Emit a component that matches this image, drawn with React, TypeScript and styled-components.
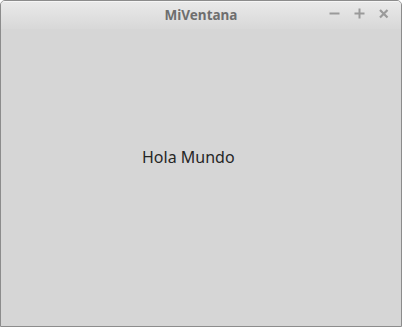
import styled, { createGlobalStyle } from "styled-components";

const Global = createGlobalStyle`
  html, body {
    margin: 0;
    padding: 0;
    background: #ffffff;
  }
`;

const Window = styled.div`
  width: 402px;
  height: 327px;
  box-sizing: border-box;
  border: 1px solid #8c8c8c;
  border-radius: 5px 5px 0 0;
  background: #d6d6d6;
  display: flex;
  flex-direction: column;
  overflow: hidden;
  font-family: "Noto Sans", "DejaVu Sans", sans-serif;
`;

const TitleBar = styled.div`
  height: 27px;
  display: grid;
  grid-template-columns: 1fr auto 1fr;
  align-items: center;
  background: linear-gradient(#e9e9e9, #d8d8d8);
  border-top: 1px solid #f6f6f6;
`;

const Title = styled.div`
  font-weight: bold;
  font-size: 13.5px;
  color: #6e6e6e;
  padding-bottom: 2px;
`;

const Controls = styled.div`
  justify-self: end;
  display: flex;
  gap: 9px;
  padding-right: 10px;
  padding-bottom: 5px;
`;

const Control = styled.svg`
  width: 15px;
  height: 15px;
  display: block;
`;

const Content = styled.div`
  flex: 1;
  display: flex;
  padding: 117px 0 0 141px;
  font-size: 16px;
  color: #262626;
`;

export default function App() {
  return (
    <>
      <Global />
      <Window>
        <TitleBar>
          <div />
          <Title>MiVentana</Title>
          <Controls>
            <Control viewBox="0 0 15 15">
              <path d="M1.5 7.5h10" stroke="#9a9a9a" strokeWidth="2" />
            </Control>
            <Control viewBox="0 0 15 15">
              <path d="M2.5 7.5h10M7.5 2.5v10" stroke="#9a9a9a" strokeWidth="2" />
            </Control>
            <Control viewBox="0 0 15 15">
              <path d="M4 4l7.5 7.5M11.5 4l-7.5 7.5" stroke="#9a9a9a" strokeWidth="2.2" />
            </Control>
          </Controls>
        </TitleBar>
        <Content>Hola Mundo</Content>
      </Window>
    </>
  );
}
